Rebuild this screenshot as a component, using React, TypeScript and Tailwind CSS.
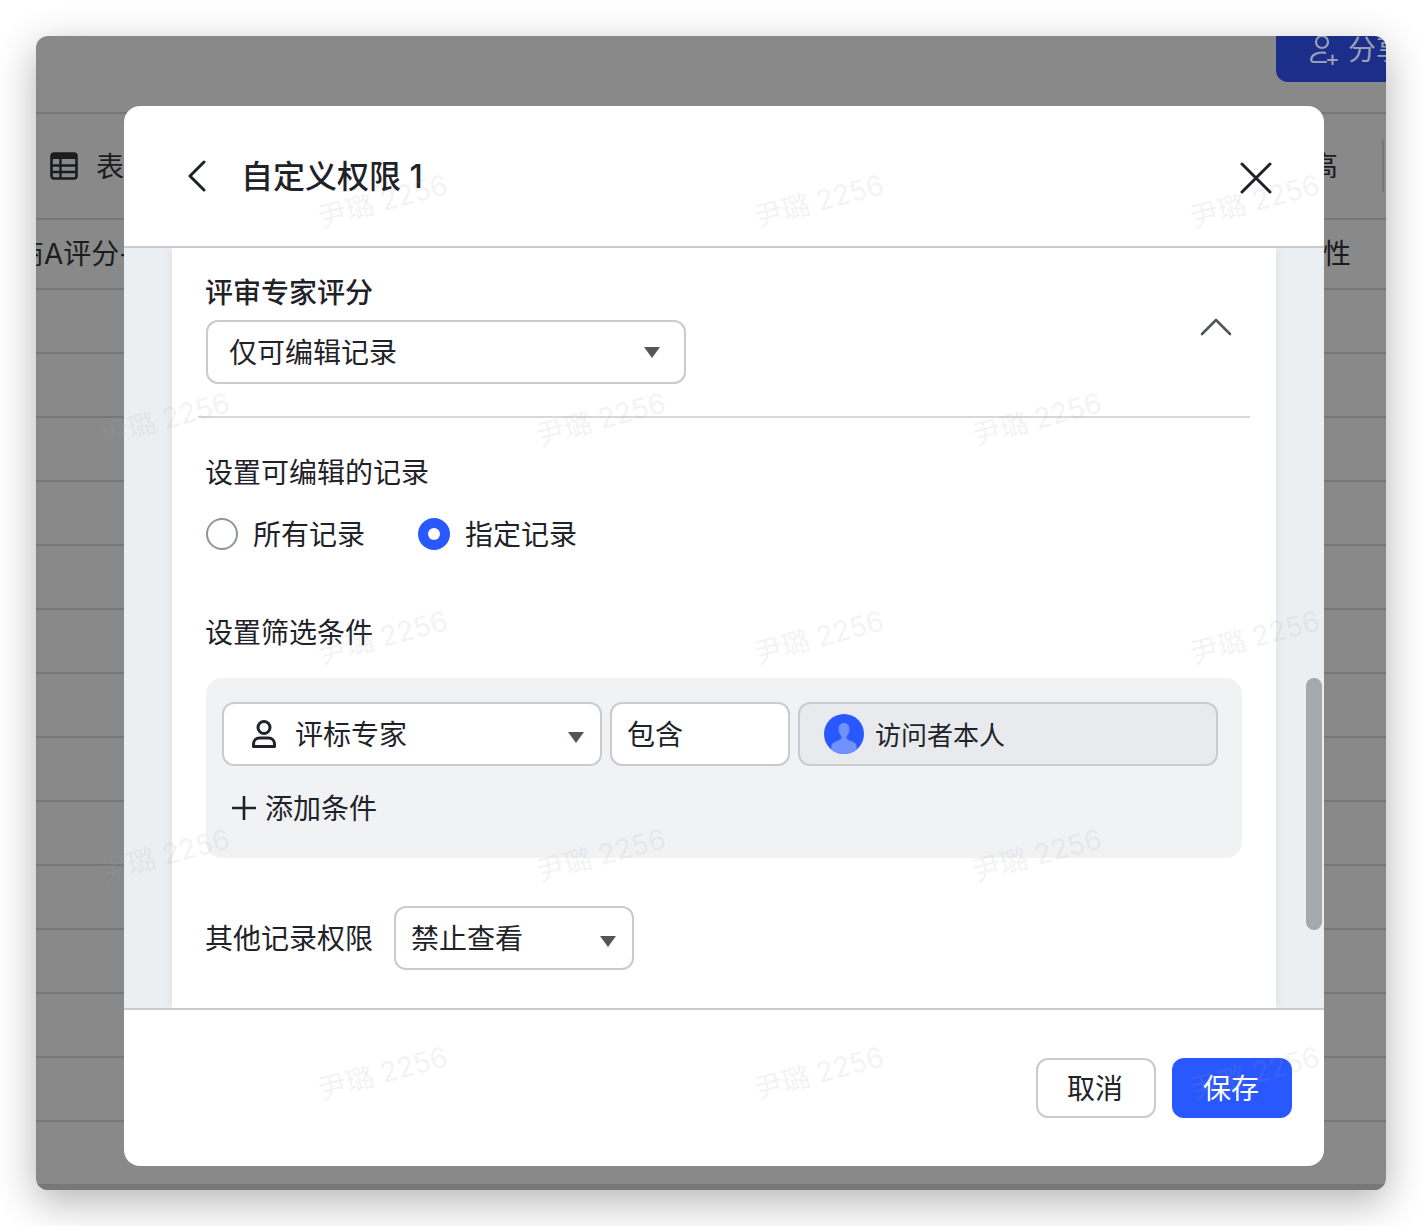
import React from "react";

const marks: [number, number][] = [
  [347, 165], [783, 165], [1219, 165],
  [129, 383], [565, 383], [1001, 383],
  [347, 601], [783, 601], [1219, 601],
  [129, 819], [565, 819], [1001, 819],
  [347, 1037], [783, 1037], [1219, 1037],
];

function Caret({ className = "" }: { className?: string }) {
  return (
    <svg width="16" height="11" viewBox="0 0 16 11" className={"shrink-0 " + className}>
      <path d="M0 0H16L8 11Z" fill="#51565d" />
    </svg>
  );
}

function TableRow({ children, className }: { children?: React.ReactNode; className: string }) {
  return <div className={"shrink-0 border-b-2 border-[#75777a] " + className}>{children}</div>;
}

export default function App() {
  return (
    <div className="w-[1422px] h-[1226px] bg-white pt-9 pl-9 font-[Inter,'Noto_Sans_CJK_SC',sans-serif] text-[28px] leading-[40px] text-[#1f2329]">
      <div className="relative w-[1350px] h-[1154px] rounded-xl overflow-hidden bg-[#888988] shadow-[0_12px_40px_rgba(0,0,0,0.3)]">
        {/* dimmed page behind the dialog */}
        <div className="flex flex-col h-full text-[#1b1c1e]">
          <TableRow className="h-[78px] flex justify-end items-start">
            <div className="w-[110px] h-[46px] rounded-bl-xl bg-[#1a2e8a] flex items-center pl-[34px] pb-[18px] gap-[10px] text-[#9a9fb4] whitespace-nowrap overflow-hidden">
              <svg width="28" height="30" viewBox="0 0 28 30" fill="none" stroke="#9a9fb4" strokeWidth="2.2" className="shrink-0">
                <circle cx="12" cy="7" r="6" />
                <path d="M16 27H3.5C2 27 1.2 26 1.2 24.8C1.2 20.5 6 17.5 12 17.5C13 17.5 14 17.6 15 17.8" strokeLinecap="round" />
                <path d="M18 25H27M22.5 20.5V29.5" strokeLinecap="round" />
              </svg>
              <span>分享</span>
            </div>
          </TableRow>
          <TableRow className="h-[106px] flex items-center justify-between pl-[14px] pr-[2px]">
            <div className="flex items-center gap-[18px]">
              <svg width="28" height="28" viewBox="0 0 28 28" fill="none" className="shrink-0">
                <rect x="1.5" y="1.5" width="25" height="25" rx="2.5" stroke="#1b1c1e" strokeWidth="2.6" />
                <path d="M1.5 4C1.5 2.5 2.5 1.5 4 1.5H24C25.5 1.5 26.5 2.5 26.5 4V7H1.5Z" fill="#1b1c1e" />
                <path d="M2 13.5H26M2 20H26M10.5 7V26" stroke="#1b1c1e" strokeWidth="2.4" />
              </svg>
              <span className="pt-[2px]">表</span>
            </div>
            <div className="flex items-center gap-[44px]">
              <span>高</span>
              <div className="w-[2px] h-[52px] bg-[#75777a]" />
            </div>
          </TableRow>
          <TableRow className="h-[70px] flex items-center justify-between pr-[35px]">
            <span className="ml-[-20px] whitespace-nowrap">商A评分-</span>
            <span>性</span>
          </TableRow>
          {Array.from({ length: 14 }).map((_, i) => (
            <TableRow key={i} className="h-[64px]" />
          ))}
          <div className="flex-1 bg-[#777878]" />
        </div>

        {/* dialog */}
        <div className="absolute left-[88px] top-[70px] w-[1200px] h-[1060px] rounded-2xl overflow-hidden bg-white flex flex-col">
          <header className="h-[142px] shrink-0 border-b-2 border-[#c9cbd0] flex items-center pl-[64px] pr-[52px]">
            <svg width="18" height="32" viewBox="0 0 18 32" fill="none" stroke="#1f2329" strokeWidth="3" strokeLinecap="round" strokeLinejoin="round" className="shrink-0">
              <path d="M16 2L2 16L16 30" />
            </svg>
            <h1 className="ml-[35px] pt-[2px] flex-1 text-[32px] font-medium leading-[44px]">自定义权限 1</h1>
            <svg width="32" height="32" viewBox="0 0 32 32" fill="none" stroke="#1f2329" strokeWidth="3" strokeLinecap="round" className="shrink-0 mt-[4px]">
              <path d="M2 2L30 30M30 2L2 30" />
            </svg>
          </header>

          <div className="relative flex-1 min-h-0 bg-[#eceff2] overflow-hidden pl-12">
            <div className="w-[1104px] h-full bg-white px-[34px] pt-6 shadow-[0_0_8px_rgba(0,0,0,0.07)]">
              <div className="flex items-center justify-between pr-[11px]">
                <div>
                  <div className="font-medium pt-px -ml-px">评审专家评分</div>
                  <div className="mt-[7px] w-[480px] h-16 rounded-xl border-2 border-[#c9cbd0] bg-white flex items-center justify-between pl-[21px] pr-[24px]">
                    <span className="pt-[2px]">仅可编辑记录</span>
                    <Caret />
                  </div>
                </div>
                <svg width="32" height="18" viewBox="0 0 32 18" fill="none" stroke="#51565d" strokeWidth="2.6" strokeLinecap="round" strokeLinejoin="round" className="mr-[-1px] mb-[2px]">
                  <path d="M2 16L16 2L30 16" />
                </svg>
              </div>
              <div className="mt-8 -mx-2 h-[2px] bg-[#d6d8dc]" />

              <div className="mt-[34px] pt-px -ml-px">设置可编辑的记录</div>
              <div className="mt-[21px] h-10 flex items-center">
                <span className="w-8 h-8 rounded-full border-2 border-[#8f959e] bg-white" />
                <span className="ml-[15px] pt-[2px]">所有记录</span>
                <span className="ml-[53px] w-8 h-8 rounded-full bg-[#2a58ff] flex items-center justify-center">
                  <span className="w-3 h-3 rounded-full bg-white" />
                </span>
                <span className="ml-[15px] pt-[2px]">指定记录</span>
              </div>

              <div className="mt-[58px] pt-px -ml-px">设置筛选条件</div>
              <div className="mt-[25px] w-[1036px] h-[180px] rounded-2xl bg-[#f0f2f4] pt-6 px-4">
                <div className="flex gap-2">
                  <div className="w-[380px] h-16 rounded-xl border-2 border-[#c9cbd0] bg-white flex items-center pl-[27px] pr-[16px]">
                    <svg width="26" height="30" viewBox="0 0 26 30" fill="none" stroke="#1f2329" strokeWidth="3" className="shrink-0">
                      <circle cx="13" cy="8.5" r="6" />
                      <path d="M2.5 27.5V25C2.5 21.5 5 19 8.5 19H17.5C21 19 23.5 21.5 23.5 25V27.5Z" strokeLinejoin="round" />
                    </svg>
                    <span className="ml-[18px] pt-[2px] flex-1">评标专家</span>
                    <Caret className="mt-[6px]" />
                  </div>
                  <div className="w-[180px] h-16 rounded-xl border-2 border-[#c9cbd0] bg-white flex items-center pl-[15px]">
                    <span className="pt-[2px]">包含</span>
                  </div>
                  <div className="w-[420px] h-16 rounded-xl border-2 border-[#c9cbd0] bg-[#e8eaed] flex items-center pl-6 text-[26px]">
                    <svg width="40" height="40" viewBox="0 0 40 40" className="shrink-0">
                      <defs>
                        <clipPath id="av"><circle cx="20" cy="20" r="20" /></clipPath>
                      </defs>
                      <circle cx="20" cy="20" r="20" fill="#2a58ff" />
                      <g clipPath="url(#av)" fill="#6f92ff">
                        <path d="M20 9C16.6 9 14.6 11.5 14.6 15C14.6 18.5 16.2 21 17.4 22.2V24.5C17.4 26 11 27 8.5 29.5C7 31 7 36 7 40H33C33 36 33 31 31.5 29.5C29 27 22.6 26 22.6 24.5V22.2C23.8 21 25.4 18.5 25.4 15C25.4 11.5 23.4 9 20 9Z" />
                      </g>
                    </svg>
                    <span className="ml-[11px] pt-[3px]">访问者本人</span>
                  </div>
                </div>
                <div className="mt-[22px] h-10 flex items-center pl-[10px]">
                  <svg width="24" height="24" viewBox="0 0 24 24" fill="none" stroke="#1f2329" strokeWidth="2.6" className="shrink-0">
                    <path d="M0 12H24M12 0V24" />
                  </svg>
                  <span className="ml-[9px] pt-[2px]">添加条件</span>
                </div>
              </div>

              <div className="mt-12 flex items-center">
                <span className="pt-[2px] -ml-px">其他记录权限</span>
                <div className="ml-[21px] w-[240px] h-16 rounded-xl border-2 border-[#c9cbd0] bg-white flex items-center justify-between pl-[15px] pr-4">
                  <span className="pt-[2px]">禁止查看</span>
                  <Caret className="mt-[6px]" />
                </div>
              </div>
            </div>
            <div className="absolute left-[1182px] top-[430px] w-4 h-[252px] rounded-full bg-[#a5a9ab]" />
          </div>

          <footer className="h-[158px] shrink-0 border-t-2 border-[#c9cbd0] flex justify-end gap-4 pt-12 pr-8">
            <button className="w-[120px] h-[60px] rounded-xl border-2 border-[#c9cbd0] bg-white pt-[2px] pr-[2px]">取消</button>
            <button className="w-[120px] h-[60px] rounded-xl bg-[#2a58ff] text-white pt-[2px] pr-[2px]">保存</button>
          </footer>
        </div>

        {/* watermark */}
        <div className="absolute inset-0 pointer-events-none overflow-hidden">
          {marks.map(([x, y]) => (
            <span
              key={x + "-" + y}
              className="absolute -translate-x-1/2 -translate-y-1/2 -rotate-15 whitespace-nowrap text-[28px] leading-[40px] text-[#a0a5a5]/15"
              style={{ left: x, top: y }}
            >
              尹璐 2256
            </span>
          ))}
        </div>
      </div>
    </div>
  );
}
